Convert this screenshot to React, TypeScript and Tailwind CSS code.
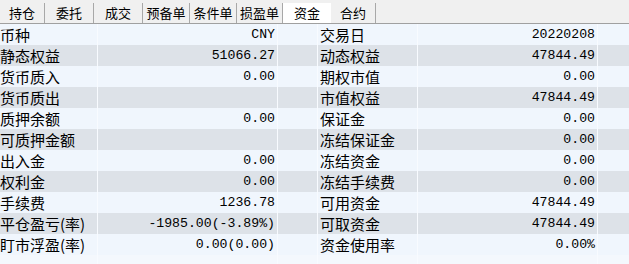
const tabs = [
  { label: '持仓', w: 'w-[45px]' },
  { label: '委托', w: 'w-[49px]' },
  { label: '成交', w: 'w-[49px]' },
  { label: '预备单', w: 'w-[47px]' },
  { label: '条件单', w: 'w-[47px]' },
  { label: '损盈单', w: 'w-[46px]' },
  { label: '资金', w: 'w-[48px]', active: true },
  { label: '合约', w: 'w-[45px]' },
];

const rows: [string, string, string, string][] = [
  ['币种', 'CNY', '交易日', '20220208'],
  ['静态权益', '51066.27', '动态权益', '47844.49'],
  ['货币质入', '0.00', '期权市值', '0.00'],
  ['货币质出', '', '市值权益', '47844.49'],
  ['质押余额', '0.00', '保证金', '0.00'],
  ['可质押金额', '', '冻结保证金', '0.00'],
  ['出入金', '0.00', '冻结资金', '0.00'],
  ['权利金', '0.00', '冻结手续费', '0.00'],
  ['手续费', '1236.78', '可用资金', '47844.49'],
  ['平仓盈亏(率)', '-1985.00(-3.89%)', '可取资金', '47844.49'],
  ['盯市浮盈(率)', '0.00(0.00)', '资金使用率', '0.00%'],
];

const cjk = "font-['SimSun','Noto_Sans_CJK_SC',sans-serif]";
const mono = "font-['Liberation_Mono','Noto_Sans_CJK_SC',monospace]";

function Row({ cells, dark }: { cells: [string, string, string, string]; dark: boolean }) {
  const [l1, v1, l2, v2] = cells;
  return (
    <div
      className={`grid grid-cols-[98px_180px_40px_100px_180px_31px] h-[21px] divide-x divide-[#f8fbff] ${
        dark ? 'bg-[#dde2e8]' : 'bg-[#f0f6fd]'
      }`}
    >
      <div className={`${cjk} text-[15px] leading-[21px] text-black whitespace-nowrap`}>{l1}</div>
      <div className={`${mono} text-[13.2px] leading-[21px] text-black text-right pr-[2px] whitespace-nowrap`}>{v1}</div>
      <div />
      <div className={`${cjk} text-[15px] leading-[21px] text-black pl-[2px] whitespace-nowrap`}>{l2}</div>
      <div className={`${mono} text-[13.2px] leading-[21px] text-black text-right pr-[2px] whitespace-nowrap`}>{v2}</div>
      <div />
    </div>
  );
}

export default function App() {
  return (
    <div className="w-[629px] h-[264px] overflow-hidden bg-[#f4f8fd]">
      {/* tab strip */}
      <div className="flex items-end h-[24px] bg-[#f0f0f0] border-b border-[#a0a0a0]">
        {tabs.map((t, i) => (
          <div
            key={t.label}
            className={`${t.w} h-[20px] flex items-center justify-center ${cjk} text-[13px] text-black ${
              t.active ? 'bg-white' : 'border-r border-[#a8a8a8]'
            } ${i === tabs.length - 1 ? 'border-r border-[#a8a8a8]' : ''}`}
          >
            {t.label}
          </div>
        ))}
      </div>

      {rows.map((r, i) => (
        <Row key={r[0]} cells={r} dark={i % 2 === 1} />
      ))}

      <div className="grid grid-cols-[98px_180px_40px_100px_180px_31px] h-[12px] divide-x divide-[#f8fbff] bg-[#f4f8fd]">
        <div />
        <div />
        <div />
        <div />
        <div />
        <div />
      </div>
    </div>
  );
}
